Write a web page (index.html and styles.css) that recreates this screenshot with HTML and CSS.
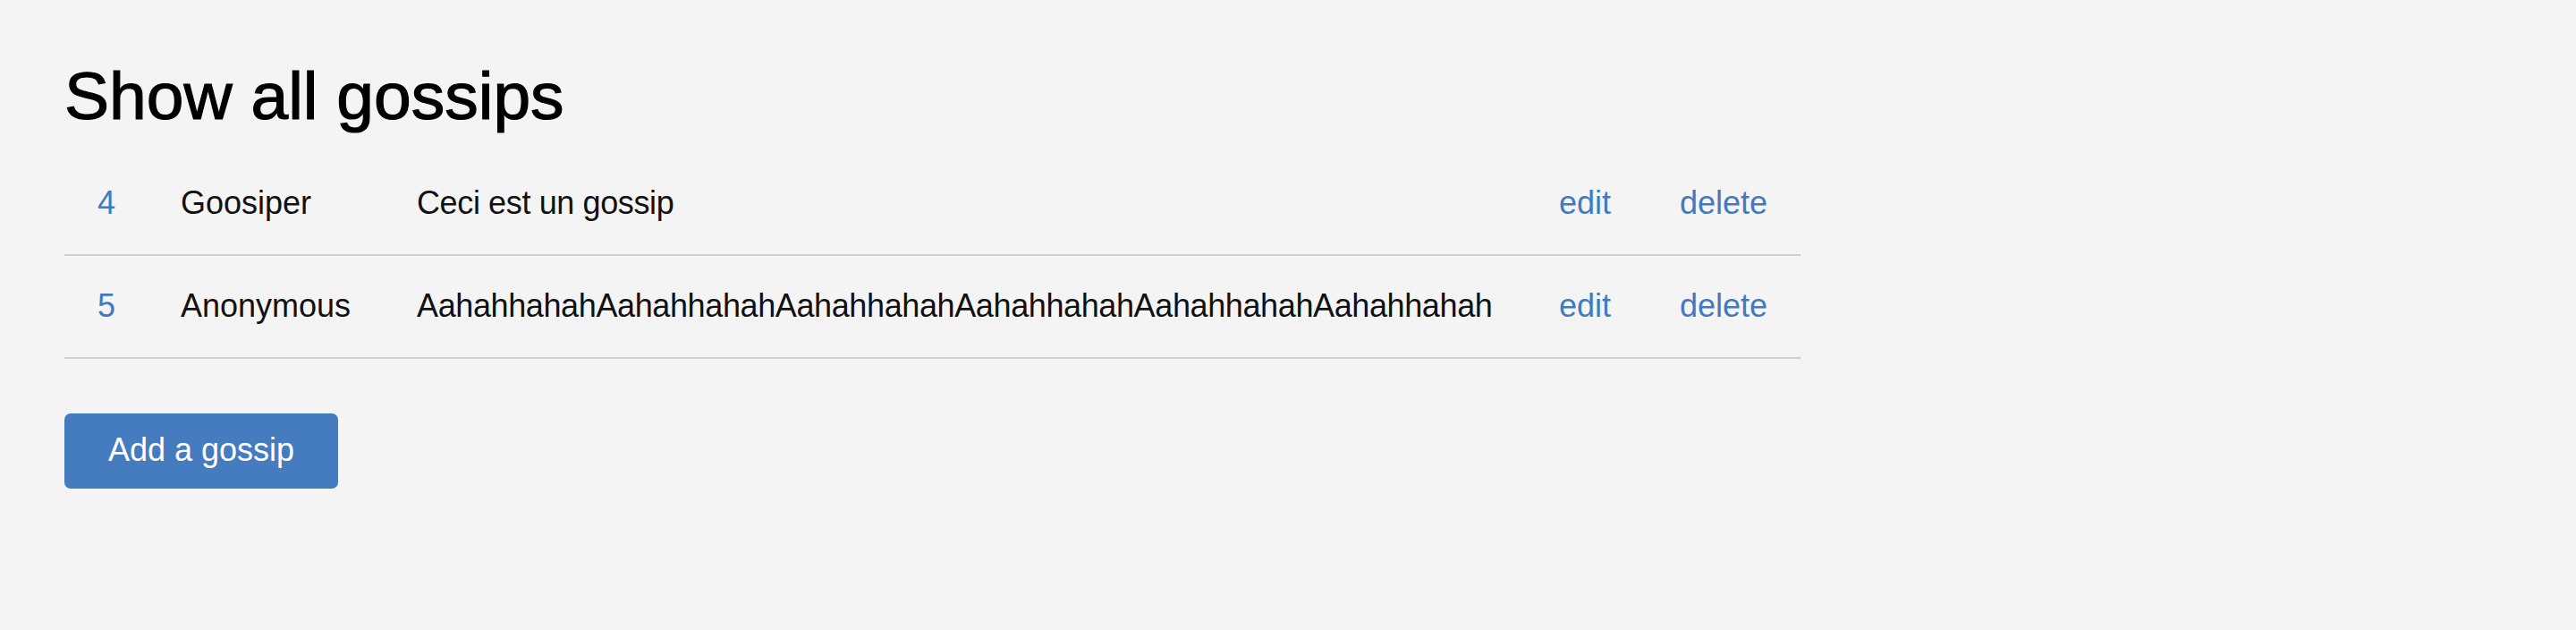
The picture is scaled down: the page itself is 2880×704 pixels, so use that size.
FILE: index.html
```html
<!DOCTYPE html>
<html lang="en">
<head>
<meta charset="utf-8">
<title>Show all gossips</title>
<link rel="stylesheet" href="styles.css">
</head>
<body>
<main class="page">
  <h1 class="title">Show all gossips</h1>
  <table class="gossips">
    <colgroup>
      <col class="col-id">
      <col class="col-author">
      <col class="col-msg">
      <col class="col-edit">
      <col class="col-delete">
    </colgroup>
    <tbody>
      <tr>
        <td><a class="link" href="#">4</a></td>
        <td>Goosiper</td>
        <td class="msg">Ceci est un gossip</td>
        <td><a class="link" href="#">edit</a></td>
        <td><a class="link" href="#">delete</a></td>
      </tr>
      <tr>
        <td><a class="link" href="#">5</a></td>
        <td>Anonymous</td>
        <td class="msg">AahahhahahAahahhahahAahahhahahAahahhahahAahahhahahAahahhahah</td>
        <td><a class="link" href="#">edit</a></td>
        <td><a class="link" href="#">delete</a></td>
      </tr>
    </tbody>
  </table>
  <a class="btn" href="#">Add a gossip</a>
</main>
</body>
</html>
```

FILE: styles.css
```css
html, body {
  margin: 0;
  padding: 0;
  background: #f4f4f4;
}

body {
  font-family: "Liberation Sans", Arial, sans-serif;
  color: #111111;
  font-size: 36px;
  line-height: 50px;
}

.page {
  padding: 0 72px;
}

.title {
  margin: 66px 0 23px;
  font-size: 75px;
  line-height: 82px;
  font-weight: 400;
  color: #000000;
  -webkit-text-stroke: 1.2px #000000;
}

.gossips {
  width: 1941px;
  table-layout: fixed;
  border-collapse: collapse;
  border-spacing: 0;
}

.col-id { width: 93px; }
.col-author { width: 264px; }
.col-msg { width: 1277px; }
.col-edit { width: 135px; }
.col-delete { width: 172px; }

.gossips td {
  padding: 31px 37px 32px;
  border-bottom: 2px solid #cfcfcf;
  white-space: nowrap;
  vertical-align: middle;
}

.gossips td.msg {
  letter-spacing: -0.38px;
}

.link {
  color: #437abe;
  text-decoration: none;
}

.btn {
  display: inline-block;
  margin-top: 61px;
  padding: 0 49px 3px;
  line-height: 81px;
  background: #457bbf;
  color: #ffffff;
  border-radius: 7px;
  text-decoration: none;
  font-size: 36px;
}
```
